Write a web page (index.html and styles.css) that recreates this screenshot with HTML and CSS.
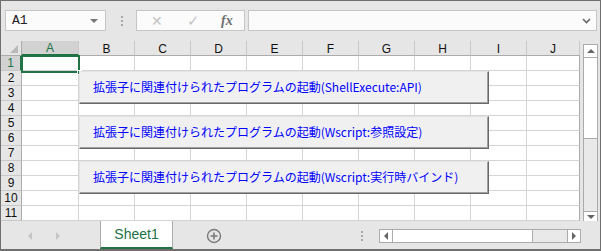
FILE: index.html
```html
<!DOCTYPE html>
<html>
    <head>
        <meta charset="UTF-8" />
        <title>Book1 - Sheet1</title>
        <link rel="stylesheet" href="styles.css">
    </head>
    <body>
        <div class="app">
            <div class="formulaBar">
                <div class="nameBox">
                    <span>A1</span>
                    <span class="caret"></span>
                </div>
                <div class="grip"></div>
                <div class="fxBox">
                    <span class="fxCancel">✕</span>
                    <span class="fxOk">✓</span>
                    <span class="fxLabel">fx</span>
                </div>
                <div class="formulaInput">
                    <svg width="9" height="6" viewBox="0 0 9 6"><path d="M1 1 L4.5 4.5 L8 1" fill="none" stroke="#666" stroke-width="1.6"/></svg>
                </div>
            </div>

            <div class="sheetArea">
                <div id="grid" class="grid"></div>
                <div class="vScroll">
                    <div class="sbBtn"><span class="triUp"></span></div>
                    <div class="vThumb"></div>
                    <div class="vTrack"></div>
                    <div class="sbBtn"><span class="triDown"></span></div>
                </div>

                <div class="selection"><span class="handle"></span></div>

                <button class="macroBtn btn1">拡張子に関連付けられたプログラムの起動(ShellExecute:API)</button>
                <button class="macroBtn btn2">拡張子に関連付けられたプログラムの起動(Wscript:参照設定)</button>
                <button class="macroBtn btn3">拡張子に関連付けられたプログラムの起動(Wscript:実行時バインド)</button>
            </div>

            <div class="tabBar">
                <div class="tabNav">
                    <span class="navLeft"></span>
                    <span class="navRight"></span>
                </div>
                <div class="sheetTab">Sheet1</div>
                <div class="addSheet">
                    <svg width="16" height="16" viewBox="0 0 16 16">
                        <circle cx="8" cy="8" r="6.5" fill="none" stroke="#7a7a7a" stroke-width="1.4"/>
                        <path d="M8 4.5 V11.5 M4.5 8 H11.5" stroke="#7a7a7a" stroke-width="1.6"/>
                    </svg>
                </div>
                <div class="tabGrip"></div>
                <div class="hScroll">
                    <div class="sbBtn"><span class="triLeft"></span></div>
                    <div class="hThumb"></div>
                    <div class="hTrack"></div>
                    <div class="sbBtn"><span class="triRight"></span></div>
                </div>
            </div>
        </div>

        <script>
            const cols = ["A", "B", "C", "D", "E", "F", "G", "H", "I", "J"];
            const grid = document.getElementById("grid");

            function cell(cls, text) {
                const div = document.createElement("div");
                div.className = cls;
                if (text) div.textContent = text;
                grid.appendChild(div);
            }

            cell("corner");
            cols.forEach((c, i) => cell(i === 0 ? "colHead active" : "colHead", c));
            for (let r = 1; r <= 11; r++) {
                cell(r === 1 ? "rowHead active" : "rowHead", String(r));
                cols.forEach(() => cell("cell"));
            }
        </script>
    </body>
</html>
```
FILE: styles.css
```css
*,
*::before,
*::after {
    box-sizing: border-box;
}

html,
body {
    margin: 0;
    padding: 0;
    background: #e6e6e6;
    font-family: "Liberation Sans", Arial, sans-serif;
}

.app {
    width: 601px;
    height: 251px;
    border: 1px solid #6f6f6f;
    border-bottom-width: 2px;
    background: #e6e6e6;
    display: flex;
    flex-direction: column;
    overflow: hidden;
}

/* 數式列 */
.formulaBar {
    height: 40px;
    display: flex;
    align-items: flex-start;
    padding: 9px 0 0 4px;
}

.nameBox {
    width: 101px;
    height: 21px;
    background: #fbfbfb;
    border: 1px solid #c6c6c6;
    display: flex;
    align-items: center;
    justify-content: space-between;
    padding: 0 7px 0 6px;
    font-family: "Liberation Mono", monospace;
    font-size: 13px;
    color: #222;
}

.caret {
    width: 0;
    height: 0;
    border-left: 4px solid transparent;
    border-right: 4px solid transparent;
    border-top: 4px solid #777;
}

.grip {
    width: 2px;
    height: 10px;
    margin: 6px 13px 0 15px;
    background: repeating-linear-gradient(to bottom, #a8a8a8 0 2px, transparent 2px 4px);
}

.fxBox {
    width: 109px;
    height: 21px;
    background: #fbfbfb;
    border: 1px solid #c6c6c6;
    display: flex;
    align-items: center;
    padding-left: 14px;
    color: #c4c4c4;
    font-size: 14px;
}

.fxCancel {
    width: 36px;
}

.fxOk {
    width: 34px;
    font-size: 15px;
}

.fxLabel {
    font-family: "Liberation Serif", serif;
    font-style: italic;
    font-weight: bold;
    color: #707070;
    font-size: 14px;
}

.formulaInput {
    flex: 1;
    height: 21px;
    margin: 0 3px 0 3px;
    background: #fbfbfb;
    border: 1px solid #c6c6c6;
    display: flex;
    align-items: center;
    justify-content: flex-end;
    padding-right: 5px;
}

/* 工作表 */
.sheetArea {
    position: relative;
    height: 181px;
    display: flex;
}

.grid {
    display: grid;
    grid-template-columns: 21px 57px repeat(8, 56px) 53px;
    grid-template-rows: 15px repeat(11, 15px);
    width: 579px;
    height: 180px;
    background: #fff;
    border-bottom: 1px solid #ababab;
}

.corner,
.colHead,
.rowHead {
    background: #e6e6e6;
    font-size: 12px;
    color: #111;
    display: flex;
    align-items: center;
    justify-content: center;
}

.corner {
    border-right: 1px solid #ababab;
    border-bottom: 1px solid #ababab;
    position: relative;
}

.corner::after {
    content: "";
    position: absolute;
    right: 3px;
    bottom: 2px;
    border-left: 8px solid transparent;
    border-bottom: 8px solid #b8b8b8;
}

.colHead {
    border-right: 1px solid #c8c8c8;
    border-bottom: 1px solid #ababab;
    padding-top: 1px;
}

.colHead:last-of-type {
    border-right: 1px solid #ababab;
}

.rowHead {
    border-right: 1px solid #ababab;
    border-bottom: 1px solid #c8c8c8;
}

.colHead.active {
    background: #d2d2d2;
    color: #217346;
    border-bottom: 2px solid #217346;
}

.rowHead.active {
    background: #d2d2d2;
    color: #217346;
    border-right: 2px solid #217346;
}

.cell {
    border-right: 1px solid #d4d4d4;
    border-bottom: 1px solid #d4d4d4;
}

.grid > .cell:nth-child(11n) {
    border-right: 1px solid #ababab;
}

.selection {
    position: absolute;
    left: 20px;
    top: 14px;
    width: 59px;
    height: 18px;
    border: 2px solid #217346;
}

.handle {
    position: absolute;
    right: -4px;
    bottom: -4px;
    width: 5px;
    height: 5px;
    background: #217346;
    border: 1px solid #fff;
}

/* 縦スクロール */
.vScroll {
    width: 15px;
    margin: 3px 0 0 3px;
    height: 177px;
    display: flex;
    flex-direction: column;
    border: 1px solid #ababab;
    border-bottom: none;
    background: #e9e9e9;
}

.sbBtn {
    flex: 0 0 13px;
    background: #fff;
    display: flex;
    align-items: center;
    justify-content: center;
}

.vScroll .sbBtn:first-child {
    border-bottom: 1px solid #ababab;
}

.vScroll .sbBtn:last-child {
    border-top: 1px solid #ababab;
    flex-basis: 10px;
    align-items: flex-start;
    padding-top: 3px;
}

.vThumb {
    height: 81px;
    background: #fff;
    border-bottom: 1px solid #ababab;
}

.vTrack,
.hTrack {
    flex: 1;
    background: #e9e9e9;
}

.triUp,
.triDown,
.triLeft,
.triRight {
    width: 0;
    height: 0;
}

.triUp {
    border-left: 4px solid transparent;
    border-right: 4px solid transparent;
    border-bottom: 4px solid #666;
}

.triDown {
    border-left: 4px solid transparent;
    border-right: 4px solid transparent;
    border-top: 4px solid #666;
}

.triLeft {
    border-top: 4px solid transparent;
    border-bottom: 4px solid transparent;
    border-right: 4px solid #666;
}

.triRight {
    border-top: 4px solid transparent;
    border-bottom: 4px solid transparent;
    border-left: 4px solid #666;
}

/* マクロボタン */
.macroBtn {
    position: absolute;
    left: 78px;
    width: 410px;
    height: 33px;
    padding: 0 0 1px 13px;
    text-align: left;
    background: #f0f0f0;
    border: 1px solid;
    border-color: #e4e4e4 #696969 #696969 #e4e4e4;
    box-shadow: inset -1px -1px 0 #a0a0a0;
    color: #0000ff;
    font-family: "Noto Sans CJK JP", sans-serif;
    font-size: 12px;
    line-height: 1;
    white-space: nowrap;
}

.btn1 { top: 30px; }
.btn2 { top: 75px; }
.btn3 { top: 120px; }

/* シートタブ */
.tabBar {
    flex: 1;
    display: flex;
    align-items: stretch;
    background: #e6e6e6;
}

.tabNav {
    width: 99px;
    display: flex;
    align-items: center;
    padding-left: 27px;
    gap: 24px;
}

.navLeft {
    border-top: 4px solid transparent;
    border-bottom: 4px solid transparent;
    border-right: 4px solid #c4c4c4;
}

.navRight {
    border-top: 4px solid transparent;
    border-bottom: 4px solid transparent;
    border-left: 4px solid #c4c4c4;
}

.sheetTab {
    width: 73px;
    background: #fff;
    border-left: 1px solid #ababab;
    border-right: 1px solid #ababab;
    border-bottom: 2px solid #217346;
    margin-top: -1px;
    color: #217346;
    font-size: 14px;
    display: flex;
    align-items: center;
    justify-content: center;
    padding-bottom: 1px;
}

.addSheet {
    width: 84px;
    display: flex;
    align-items: center;
    padding-left: 33px;
}

.tabGrip {
    width: 2px;
    height: 10px;
    align-self: center;
    margin: 0 16px 0 104px;
    background: repeating-linear-gradient(to bottom, #a8a8a8 0 2px, transparent 2px 4px);
}

.hScroll {
    width: 202px;
    height: 14px;
    align-self: center;
    display: flex;
    border: 1px solid #ababab;
    background: #e9e9e9;
}

.hScroll .sbBtn:first-child {
    border-right: 1px solid #ababab;
}

.hScroll .sbBtn:last-child {
    border-left: 1px solid #ababab;
}

.hThumb {
    width: 140px;
    background: #fff;
    border-right: 1px solid #ababab;
}
```
